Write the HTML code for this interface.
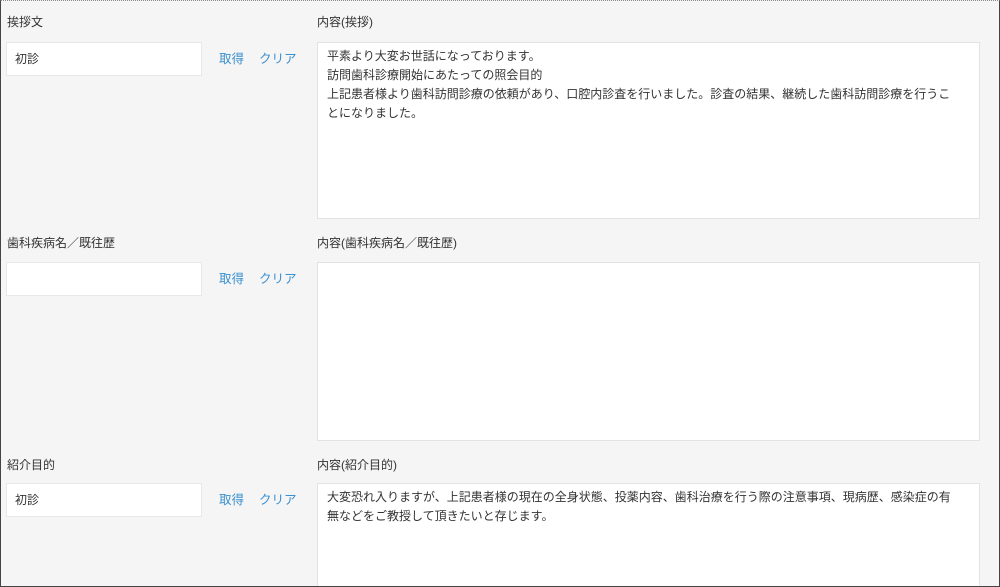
<!DOCTYPE html>
<html><head><meta charset="utf-8"><style>
*{box-sizing:border-box;margin:0;padding:0}
html,body{width:1000px;height:587px;overflow:hidden}
body{background:#f5f5f5;font-family:"Liberation Sans","Noto Sans CJK JP",sans-serif;font-size:12px;color:#333;position:relative}
.frame{position:absolute;left:0;top:0;width:1000px;height:587px;border:1px solid #444;border-top:1px dotted #888}
.lbl{position:absolute;font-size:12px;color:#333}
.in{position:absolute;left:6px;width:196px;height:34px;background:#fff;border:1px solid #e8e8e8;padding:7px 8px;font-size:12px}
.lk{position:absolute;color:#3a8fd0;font-size:12.5px}
.ta{position:absolute;left:317px;width:663px;background:#fff;border:1px solid #e3e3e3;padding:4px 20px 7px 9px;line-height:19px;font-size:12px;color:#333}
</style></head><body>
<div class="lbl" style="left:7px;top:13px">挨拶文</div>
<div class="lbl" style="left:317px;top:13px">内容(挨拶)</div>
<div class="in" style="top:42px">初診</div>
<div class="lk" style="left:219px;top:48px">取得</div>
<div class="lk" style="left:259px;top:48px">クリア</div>
<div class="ta" style="top:42px;height:177px">平素より大変お世話になっております。<br>訪問歯科診療開始にあたっての照会目的<br>上記患者様より歯科訪問診療の依頼があり、口腔内診査を行いました。診査の結果、継続した歯科訪問診療を行うことになりました。</div>

<div class="lbl" style="left:7px;top:234px">歯科疾病名／既往歴</div>
<div class="lbl" style="left:317px;top:234px">内容(歯科疾病名／既往歴)</div>
<div class="in" style="top:262px"></div>
<div class="lk" style="left:219px;top:268px">取得</div>
<div class="lk" style="left:259px;top:268px">クリア</div>
<div class="ta" style="top:262px;height:179px"></div>

<div class="lbl" style="left:7px;top:456px">紹介目的</div>
<div class="lbl" style="left:317px;top:456px">内容(紹介目的)</div>
<div class="in" style="top:483px">初診</div>
<div class="lk" style="left:219px;top:489px">取得</div>
<div class="lk" style="left:259px;top:489px">クリア</div>
<div class="ta" style="top:483px;height:104px">大変恐れ入りますが、上記患者様の現在の全身状態、投薬内容、歯科治療を行う際の注意事項、現病歴、感染症の有無などをご教授して頂きたいと存じます。</div>
<div class="frame"></div>
</body></html>
